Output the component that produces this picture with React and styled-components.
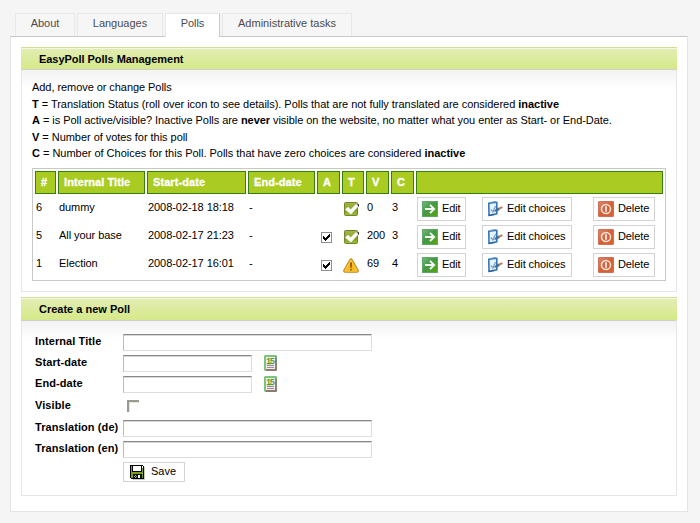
import React from "react";
import styled, { createGlobalStyle } from "styled-components";

const GlobalStyle = createGlobalStyle`
  * { box-sizing: border-box; }
  body {
    margin: 0;
    background: #f5f5f5;
    color: #000;
    font-family: "Liberation Sans", Arial, Helvetica, sans-serif;
    font-size: 11px;
    line-height: 16px;
  }
`;

const Page = styled.div`
  width: 700px;
  height: 523px;
  padding: 13px 0 0 10px;
  overflow: hidden;
`;

const TabBar = styled.nav`
  display: flex;
  gap: 2px;
  height: 23px;
  padding-left: 5px;
`;

const Tab = styled.div`
  width: ${(p) => p.$width}px;
  height: ${(p) => (p.$active ? 24 : 23)}px;
  border: 1px solid #e8e8e8;
  border-bottom: 0;
  border-right-color: ${(p) => (p.$active ? "#c8c8c8" : "#e8e8e8")};
  background: ${(p) => (p.$active ? "#fff" : "#f6f6f6")};
  color: #4c4c4c;
  line-height: 19px;
  text-align: center;
  white-space: nowrap;
  letter-spacing: ${(p) => p.$spacing || 0}px;
  z-index: 1;
`;

const Panel = styled.main`
  display: flex;
  flex-direction: column;
  gap: 5px;
  width: 678px;
  height: 476px;
  padding: 10px;
  border: 1px solid #e4e4e4;
  border-top-color: #c8c8c8;
  background: #fff;
`;

const Section = styled.section`
  display: flex;
  flex-direction: column;
  width: 656px;
  height: ${(p) => p.$height}px;
`;

const SectionTitle = styled.h2`
  flex: none;
  height: ${(p) => p.$height}px;
  margin: 0;
  padding-left: 18px;
  border-top: 1px solid #d0de98;
  background: linear-gradient(#f4f8e2 0 1px, #e1edb2 1px, #d6e988 100%);
  font-size: 11px;
  line-height: 23px;
  letter-spacing: ${(p) => p.$spacing || 0}px;
`;

const SectionBody = styled.div`
  flex: 1;
  padding: ${(p) => p.$padding};
  border: 1px solid #e6e6e6;
  border-top-color: #cfcfcf;
  background: linear-gradient(#f2f2f2, #fff 18px);
`;

const Legend = styled.div`
  display: flex;
  flex-direction: column;
  height: 89px;
`;

const LegendLine = styled.p`
  margin: 0;
  height: 16.5px;
  line-height: 16.5px;
  white-space: nowrap;
  letter-spacing: ${(p) => p.$spacing || 0}px;
`;

const PollTable = styled.div`
  display: flex;
  flex-direction: column;
  gap: 2px;
  width: 634px;
  height: 113px;
  padding: 2px;
  border: 1px solid #c8c8c8;
  background: #fff;
`;

const PollRow = styled.div`
  display: grid;
  grid-template-columns: 21px 87px 99px 67px 23px 22px 23px 23px 247px;
  column-gap: 2px;
  height: ${(p) => (p.$head ? 23 : 26)}px;
`;

const HeadCell = styled.div`
  padding-left: 5px;
  border: 1px solid #37800b;
  background: #aacc22;
  color: #fff;
  font-weight: bold;
  line-height: 21px;
  letter-spacing: 0.08px;
  -webkit-text-stroke: 0.3px #fff;
`;

const Cell = styled.div`
  padding-left: 1px;
  line-height: 22px;
  white-space: nowrap;
  letter-spacing: -0.06px;
`;

const IconCell = styled.div`
  padding: ${(p) => p.$padding};
  svg { display: block; }
`;

const Actions = styled.div`
  display: flex;
  align-items: flex-start;
  padding: 1px 0 0 1px;
`;

const Button = styled.button`
  display: flex;
  align-items: center;
  width: ${(p) => p.$width}px;
  height: ${(p) => p.$height || 24}px;
  margin: 0 ${(p) => p.$after || 0}px 0 0;
  padding: 0 0 0 ${(p) => p.$inset || 4}px;
  border: 1px solid #d3d3d3;
  background: #fff;
  color: #000;
  font: 11px "Liberation Sans", Arial, sans-serif;
  letter-spacing: ${(p) => p.$spacing || 0}px;
  white-space: nowrap;
  svg { flex: none; margin-right: ${(p) => p.$gap || 4}px; }
`;

const ButtonText = styled.span`
  margin-bottom: 2px;
`;

const FormRow = styled.div`
  display: grid;
  grid-template-columns: 88px 1fr;
  height: ${(p) => p.$height || 21}px;
`;

const Label = styled.label`
  font-weight: bold;
  line-height: 15px;
  white-space: nowrap;
  letter-spacing: 0.09px;
`;

const Field = styled.div`
  display: flex;
  align-items: flex-start;
  gap: 12px;
`;

const TextInput = styled.input`
  display: block;
  width: ${(p) => p.$width}px;
  height: 17px;
  margin: 0;
  padding: 0 2px;
  border: 1px solid #dedede;
  border-top-color: #878787;
  border-left-color: #bcbcbc;
  border-radius: 0;
  background: #fff;
  box-shadow: inset 0 1px #d8d8d8;
  outline: 0;
  font: inherit;
`;

const SunkenCheck = styled.input`
  appearance: none;
  width: 12px;
  height: 12px;
  margin: 2px 0 0 4px;
  border: solid #9a9a90;
  border-width: 2px 0 0 2px;
  border-radius: 0;
  background: #fdfdfd;
  box-shadow: inset 1px 1px #e4e4df;
`;

const CheckedIcon = () => (
  <svg width="11" height="11" viewBox="0 0 11 11" shapeRendering="crispEdges">
    <path d="M.5.5h10v10H.5z" fill="#fff" stroke="#8e8e8e" />
    <path d="M2 4h1v1h1v1h1V5h1V4h1V3h1V2h1v3H8v1H7v1H6v1H5v1H4V8H3V7H2z" fill="#000" />
  </svg>
);

const OkIcon = () => (
  <svg width="16" height="15" viewBox="0 0 16 15">
    <defs>
      <linearGradient id="ok" x2="0" y2="1">
        <stop offset="0" stopColor="#a3b548" />
        <stop offset=".5" stopColor="#91a82b" />
        <stop offset=".55" stopColor="#7a9b22" />
        <stop offset="1" stopColor="#a1bf35" />
      </linearGradient>
    </defs>
    <rect x=".5" y=".5" width="13" height="13" rx="1" fill="url(#ok)" stroke="#71852a" />
    <path d="M14 2.5l1-.5v2.5l-1 .5z" fill="#111" />
    <path d="M1.2 7.6L3.9 4.9 6.8 7.4 12 2.2 14.3 4.2 7 12.2z" fill="#fff" stroke="#e6ebd6" strokeWidth=".5" />
  </svg>
);

const WarningIcon = () => (
  <svg width="16" height="15" viewBox="0 0 16 15">
    <path d="M7.1 1.1Q8 .1 8.9 1.1L15.3 12.3Q15.7 14.2 14.2 14.2H1.8Q.3 14.2.7 12.3z" fill="#f4b91f" stroke="#c08120" />
    <path d="M8 2.5L13.8 13H2.2z" fill="none" stroke="#ffd54b" strokeWidth=".7" />
    <path d="M7 4.5h2L8.6 10H7.4zM7.2 11h1.6v1.6H7.2z" fill="#8a5608" />
  </svg>
);

const EditIcon = () => (
  <svg width="16" height="16" viewBox="0 0 16 16">
    <defs>
      <linearGradient id="edit" x2="1" y2="1">
        <stop offset="0" stopColor="#76b981" />
        <stop offset=".45" stopColor="#449845" />
        <stop offset="1" stopColor="#55a70d" />
      </linearGradient>
    </defs>
    <rect x=".5" y=".5" width="15" height="15" fill="url(#edit)" stroke="#5fa864" />
    <path d="M3 8h9M8 3.9L12.1 8 8 12.1" fill="none" stroke="#f3faf1" strokeWidth="2" />
  </svg>
);

const ChoicesIcon = () => (
  <svg width="16" height="16" viewBox="0 0 16 16">
    <path d="M1.8 2.2L9.8 1.3V12.8L2 14.2z" fill="#e8f3fc" stroke="#3675b5" strokeWidth="1.6" />
    <path d="M3 1.5l5.8-.8" stroke="#5e8fc2" strokeWidth="1.2" />
    <path d="M1.6 14.7l6-1.1" stroke="#275e9b" />
    <path d="M3.8 8.5l2 2.3L8.6 5" fill="none" stroke="#6aa3dc" strokeWidth="1.2" />
    <path d="M6 11l3-2.6 1 1.3z" fill="#555" />
    <path d="M8.3 10l4-2.4" stroke="#426c99" strokeWidth="2.4" />
    <path d="M12 7.7l3.4-1.5" stroke="#c6764b" strokeWidth="2" />
  </svg>
);

const DeleteIcon = () => (
  <svg width="16" height="16" viewBox="0 0 16 16">
    <defs>
      <linearGradient id="delete" x2="1" y2="1">
        <stop offset="0" stopColor="#d88a73" />
        <stop offset=".5" stopColor="#d45f38" />
        <stop offset="1" stopColor="#df602c" />
      </linearGradient>
    </defs>
    <rect x=".5" y=".5" width="15" height="15" rx=".5" fill="url(#delete)" stroke="#cf7354" />
    <circle cx="8" cy="8" r="4.5" fill="none" stroke="#fbe6dd" strokeWidth="1.5" />
    <path d="M8 5.3v5.4" stroke="#fff" strokeWidth="1.6" />
  </svg>
);

const CalendarText = styled.text`
  font: 8.5px "Liberation Sans", Arial, sans-serif;
  letter-spacing: -0.8px;
  fill: #3c9a08;
  stroke: #3c9a08;
  stroke-width: 0.25px;
`;

const CalendarIcon = () => (
  <svg width="13" height="16" viewBox="0 0 13 16">
    <path d="M1 0h11l1 1v14l-1 1H1l-1-1V1z" fill="#7ac57a" />
    <path d="M12 3v12H2" fill="none" stroke="#8f6766" strokeWidth="1.4" />
    <path d="M12 1v4" stroke="#5cb05c" />
    <path d="M2 2h9v12H2z" fill="#f5e9f3" />
    <path d="M3 10.5h7M3 12.5h7" stroke="#9a8f99" />
    <CalendarText x="2.2" y="8.8">15</CalendarText>
  </svg>
);

const SaveIcon = () => (
  <svg width="15" height="15" viewBox="0 0 15 15" shapeRendering="crispEdges">
    <path d="M2 2h13v13H3v-1H2z" fill="#c9c9c9" />
    <path d="M0 0h13v1h1v13H1v-1H0z" fill="#000" />
    <path d="M1 1h12v12H1z" fill="#7d9c1c" />
    <path d="M2 1h10v6H2z" fill="#000" />
    <path d="M3 1h8v5H3z" fill="#fff" />
    <path d="M12 1h1v2h-1z" fill="#fff" />
    <path d="M3 9h9v4H3z" fill="#111" />
    <path d="M5 10h1v1H5zM4 11h1v1H4zM6 11h1v1H6zM5 12h1v1H5z" fill="#aaa" />
    <path d="M8 10h2v3H8z" fill="#fff" />
  </svg>
);

const polls = [
  { id: 6, title: "dummy", start: "2008-02-18 18:18", active: false, ok: true, votes: 0, choices: 3 },
  { id: 5, title: "All your base", start: "2008-02-17 21:23", active: true, ok: true, votes: 200, choices: 3 },
  { id: 1, title: "Election", start: "2008-02-17 16:01", active: true, ok: false, votes: 69, choices: 4 },
];

const columns = ["#", "Internal Title", "Start-date", "End-date", "A", "T", "V", "C", ""];

export default function App() {
  return (
    <Page>
      <GlobalStyle />
      <TabBar>
        <Tab $width={60}>About</Tab>
        <Tab $width={86}>Languages</Tab>
        <Tab $width={55} $spacing={-0.1} $active>Polls</Tab>
        <Tab $width={130} $spacing={0.01}>Administrative tasks</Tab>
      </TabBar>
      <Panel>
        <Section $height={245}>
          <SectionTitle $height={22} $spacing={-0.04}>EasyPoll Polls Management</SectionTitle>
          <SectionBody $padding="9px 0 0 10px">
            <Legend>
              <LegendLine $spacing={-0.06}>Add, remove or change Polls</LegendLine>
              <LegendLine $spacing={-0.03}>
                <b>T</b> = Translation Status (roll over icon to see details). Polls that are not fully translated are considered <b>inactive</b>
              </LegendLine>
              <LegendLine $spacing={-0.05}>
                <b>A</b> = is Poll active/visible? Inactive Polls are <b>never</b> visible on the website, no matter what you enter as Start- or End-Date.
              </LegendLine>
              <LegendLine $spacing={-0.04}><b>V</b> = Number of votes for this poll</LegendLine>
              <LegendLine $spacing={-0.02}>
                <b>C</b> = Number of Choices for this Poll. Polls that have zero choices are considered <b>inactive</b>
              </LegendLine>
            </Legend>
            <PollTable>
              <PollRow $head>
                {columns.map((c, i) => <HeadCell key={i}>{c}</HeadCell>)}
              </PollRow>
              {polls.map((p) => (
                <PollRow key={p.id}>
                  <Cell>{p.id}</Cell>
                  <Cell>{p.title}</Cell>
                  <Cell>{p.start}</Cell>
                  <Cell>-</Cell>
                  <IconCell $padding="8px 0 0 4px">{p.active && <CheckedIcon />}</IconCell>
                  <IconCell $padding={p.ok ? "6px 0 0 2px" : "6px 0 0 1px"}>
                    {p.ok ? <OkIcon /> : <WarningIcon />}
                  </IconCell>
                  <Cell>{p.votes}</Cell>
                  <Cell>{p.choices}</Cell>
                  <Actions>
                    <Button $width={49} $after={16} $spacing={-0.1}><EditIcon /><ButtonText>Edit</ButtonText></Button>
                    <Button $width={90} $after={21} $spacing={-0.08}><ChoicesIcon /><ButtonText>Edit choices</ButtonText></Button>
                    <Button $width={62} $spacing={-0.1}><DeleteIcon /><ButtonText>Delete</ButtonText></Button>
                  </Actions>
                </PollRow>
              ))}
            </PollTable>
          </SectionBody>
        </Section>
        <Section $height={199}>
          <SectionTitle $height={23}>Create a new Poll</SectionTitle>
          <SectionBody $padding="13px 0 0 13px">
            <FormRow>
              <Label>Internal Title</Label>
              <Field><TextInput $width={249} /></Field>
            </FormRow>
            <FormRow>
              <Label>Start-date</Label>
              <Field><TextInput $width={129} /><CalendarIcon /></Field>
            </FormRow>
            <FormRow $height={22}>
              <Label>End-date</Label>
              <Field><TextInput $width={129} /><CalendarIcon /></Field>
            </FormRow>
            <FormRow $height={22}>
              <Label>Visible</Label>
              <Field><SunkenCheck type="checkbox" /></Field>
            </FormRow>
            <FormRow>
              <Label>Translation (de)</Label>
              <Field><TextInput $width={249} /></Field>
            </FormRow>
            <FormRow>
              <Label>Translation (en)</Label>
              <Field><TextInput $width={249} /></Field>
            </FormRow>
            <FormRow>
              <span />
              <Field>
                <Button $width={62} $height={20} $inset={6} $gap={6}><SaveIcon /><ButtonText>Save</ButtonText></Button>
              </Field>
            </FormRow>
          </SectionBody>
        </Section>
      </Panel>
    </Page>
  );
}
